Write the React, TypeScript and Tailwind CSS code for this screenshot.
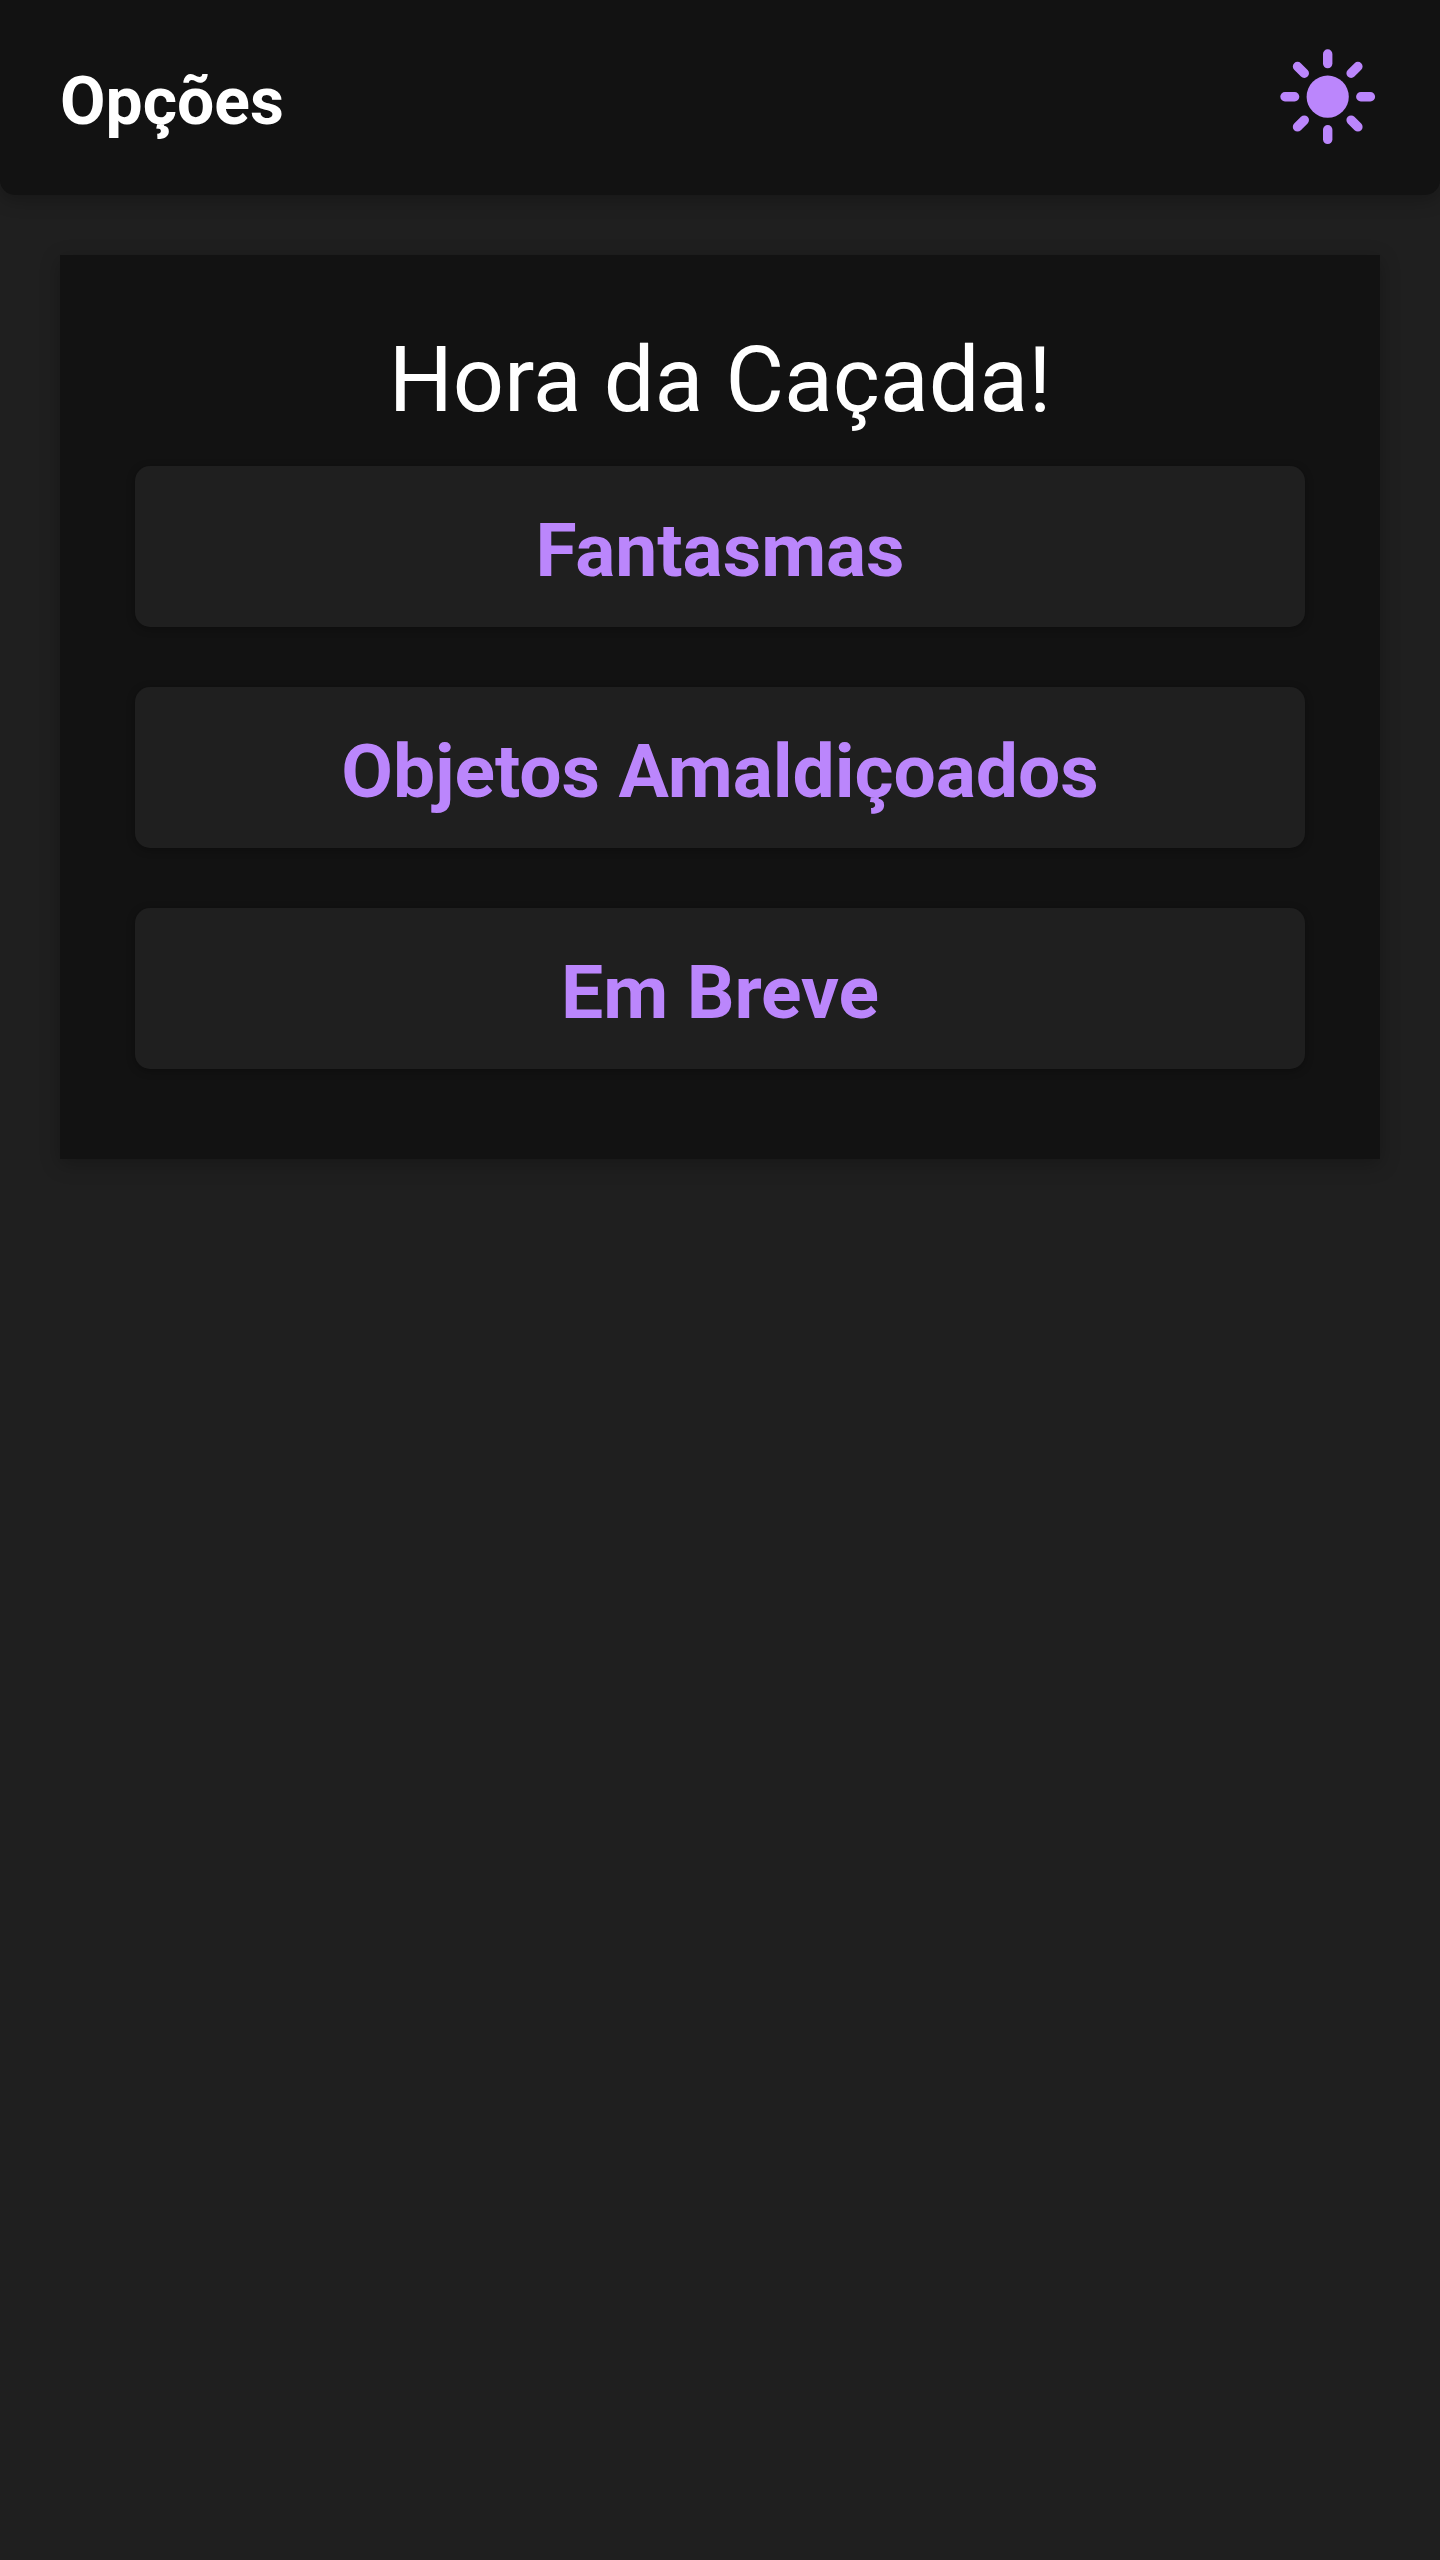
const items = ["Fantasmas", "Objetos Amaldiçoados", "Em Breve"];
const angles = [0, 45, 90, 135, 180, 225, 270, 315];

function SunIcon() {
  return (
    <svg className="h-[96px] w-[96px]" viewBox="0.3 0.3 96 96" fill="#bb86fc">
      <circle cx="48" cy="48" r="21.1" />
      {angles.map((a) => (
        <rect key={a} x="43.3" y="0.6" width="9.4" height="19" rx="4.7" transform={`rotate(${a} 48 48)`} />
      ))}
    </svg>
  );
}

export default function App() {
  return (
    <div className="min-h-[2560px] bg-[#1f1f1f] font-[Roboto,sans-serif] text-white">
      <header className="flex h-[195px] items-start justify-between rounded-b-[15px] bg-[#121212] pl-[60px] pr-[64px] pt-[49px] shadow-[0_5px_18px_rgba(0,0,0,0.25)]">
        <h1 className="mt-[14px] text-[66px] font-bold leading-[77px]">Opções</h1>
        <button aria-label="Alternar tema">
          <SunIcon />
        </button>
      </header>
      <main className="mx-[60px] mt-[60px] flex h-[904px] flex-col bg-[#121212] px-[75px] pt-[73px] shadow-[0_5px_18px_rgba(0,0,0,0.25)]">
        <h2 className="h-[138px] text-center text-[90px] leading-[105px] tracking-[-0.1px]">Hora da Caçada!</h2>
        <div className="flex flex-col gap-[60px]">
          {items.map((label) => (
            <button
              key={label}
              className="h-[161px] rounded-[15px] bg-[#1f1f1f] pb-[33px] pt-[40px] text-[75px] font-bold leading-[88px] tracking-[-0.07px] text-[#bb86fc] shadow-[0_2px_8px_rgba(0,0,0,0.3)]"
            >
              {label}
            </button>
          ))}
        </div>
      </main>
    </div>
  );
}
